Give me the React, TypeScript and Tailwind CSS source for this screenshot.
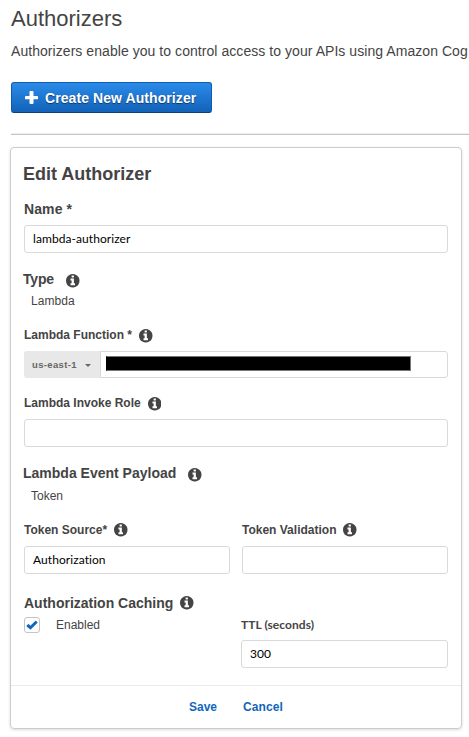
import React from "react";

function Info({ className = "" }: { className?: string }) {
  return (
    <svg viewBox="0 0 1536 1536" className={"size-[13.5px] shrink-0 fill-[#444] " + className}>
      <path d="M1024 1248v-160q0-14-9-23t-23-9h-96V544q0-14-9-23t-23-9H544q-14 0-23 9t-9 23v160q0 14 9 23t23 9h96v320h-96q-14 0-23 9t-9 23v160q0 14 9 23t23 9h448q14 0 23-9t9-23zM896 352V192q0-14-9-23t-23-9H672q-14 0-23 9t-9 23v160q0 14 9 23t23 9h192q14 0 23-9t9-23zm640 416q0 209-103 385.500T1153.500 1433 768 1536t-385.500-103T103 1153.500 0 768t103-385.500T382.500 103 768 0t385.500 103T1433 382.500 1536 768z" />
    </svg>
  );
}

function Field({ value = "", className = "" }: { value?: string; className?: string }) {
  return (
    <div
      className={
        "flex h-7 items-center rounded-[3px] border border-[#d9d9d9] bg-white pl-2 font-[Lato,sans-serif] text-[12px] tracking-[0.07px] text-black " +
        className
      }
    >
      {value}
    </div>
  );
}

export default function App() {
  return (
    <div className="h-[737px] w-[469px] overflow-hidden whitespace-nowrap bg-white font-['Liberation_Sans',Arial,sans-serif] text-[#444]">
      <h1 className="ml-[11px] h-9 pt-[5px] text-[22px] leading-[27px]">Authorizers</h1>
      <p className="ml-[11px] h-[46px] pt-[5px] text-[14px] leading-5 tracking-[0.055px]">
        Authorizers enable you to control access to your APIs using Amazon Cog
      </p>
      <button className="ml-[11px] flex h-[31px] w-[201px] items-center rounded-[3px] border border-[#0f5cae] border-b-[#0b4176] bg-linear-to-b from-[#2b8bea] to-[#1262b8] pt-px pl-[13px] text-[14px] font-bold tracking-[0.08px] text-white [text-shadow:0_1px_1px_rgba(0,0,0,0.5)]">
        <svg viewBox="0 0 13 13" className="mr-[7px] size-[13px] -translate-y-px fill-white">
          <path d="M5.400 0h2.200q.9 0 .9.900v4h3.600q.9 0 .9.900v1.600q0 .9-.9.900H8.500v3.800q0 .9-.9.900H5.400q-.9 0-.9-.9V8.300H.9Q0 8.300 0 7.400V5.800q0-.9.900-.9h3.600v-4q0-.9.900-.9z" />
        </svg>
        Create New Authorizer
      </button>
      <div className="mt-5 ml-[11px] h-[2px] border-b border-[#c8c8c8] bg-[#ededed]" />

      <section className="mt-3 ml-[10px] h-[582px] w-[452px] rounded-[4px] border border-[#ccc] shadow-[0_1px_3px_rgba(0,0,0,0.14)]">
        <div className="h-[537px] px-[13px]">
          <h2 className="-ml-px h-[51px] pt-[14px] text-[18px] leading-6 font-bold">Edit Authorizer</h2>
          <div className="h-[26px] text-[14px] leading-5 font-bold tracking-[0.1px]">Name *</div>
          <Field value="lambda-authorizer" />

          <div className="-ml-px mt-[17px] flex h-5 items-start text-[14px] leading-[19px] font-bold tracking-[-0.2px]">
            Type
            <Info className="mt-[4px] ml-[12.500px]" />
          </div>
          <div className="ml-[7px] h-[35px] text-[12px] leading-[22px] tracking-[0.07px]">Lambda</div>
          <div className="flex h-[26px] items-start text-[12px] leading-5 font-bold">
            Lambda Function *<Info className="mt-[4px] ml-[7px]" />
          </div>
          <div className="flex h-[27px]">
            <div className="flex w-[76px] items-center rounded-l-[3px] bg-[#e8e8e8] pt-px pl-2 text-[9.500px] font-bold tracking-[0.35px] text-[#666]">
              us-east-1
              <span className="mt-px ml-2 border-x-[3px] border-t-[3px] border-x-transparent border-t-[#666]" />
            </div>
            <div className="w-[348px] rounded-r-[3px] border border-[#d9d9d9] pt-1 pl-[5px]">
              <div className="h-[15px] w-[305px] border border-[#777] border-l-black bg-black" />
            </div>
          </div>

          <div className="mt-[15px] flex h-[26px] items-start text-[12px] leading-5 font-bold">
            Lambda Invoke Role
            <Info className="mt-[4px] ml-[7px]" />
          </div>
          <Field />

          <div className="-ml-px mt-[17px] flex h-5 items-start text-[14px] leading-[19px] font-bold">
            Lambda Event Payload
            <Info className="mt-[4px] ml-[12px]" />
          </div>
          <div className="ml-[7px] h-[36px] pt-px text-[12px] leading-[23px]">Token</div>

          <div className="grid grid-cols-2 gap-x-3">
            <div className="flex h-[26px] text-[12px] leading-5 font-bold">
              Token Source*
              <Info className="mt-[3px] ml-[7px]" />
            </div>
            <div className="flex h-[26px] text-[12px] leading-5 font-bold">
              Token Validation
              <Info className="mt-[3px] ml-[7px]" />
            </div>
            <Field value="Authorization" />
            <Field />
          </div>

          <div className="mt-[19px] flex h-[22px] items-start text-[14px] leading-5 font-bold">
            Authorization Caching
            <Info className="mt-[3px] ml-[7px]" />
          </div>
          <div className="flex">
            <div className="flex w-[217px] items-start pt-[2px]">
              <span className="flex size-4 items-center justify-center rounded-[3px] border border-[#c4c4c4]">
                <svg viewBox="0 0 12 10" className="h-[10px] w-3 fill-[#1166bb]">
                  <path d="M.6 5.800 2 4.300q.4-.4.900 0L4.400 5.800 9.200.9q.4-.4.900 0l1.200 1.100q.4.500 0 .9L5 9.300q-.5.500-1 0L.6 6.600q-.3-.4 0-.8z" />
                </svg>
              </span>
              <span className="ml-4 text-[12px] leading-4">Enabled</span>
            </div>
            <div className="w-[207px]">
              <div className="h-[25px] font-[Lato,sans-serif] text-[12px] leading-5 font-bold tracking-[0.05px]">
                TTL (seconds)
              </div>
              <Field value="300" />
            </div>
          </div>
        </div>
        <footer className="flex h-[43px] gap-[26px] border-t border-[#eaeaea] pt-[11px] pl-[178px] text-[12px] leading-5 font-bold text-[#1166bb]">
          <span>Save</span>
          <span className="tracking-[0.1px]">Cancel</span>
        </footer>
      </section>
    </div>
  );
}
